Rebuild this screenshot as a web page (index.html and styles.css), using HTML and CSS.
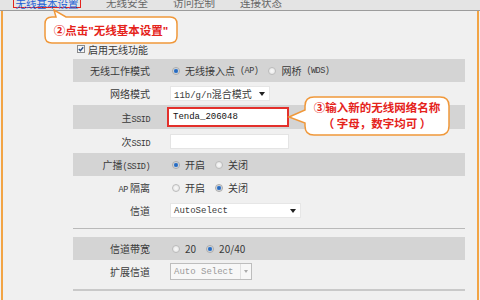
FILE: index.html
```html
<!DOCTYPE html>
<html lang="zh-CN">
<head>
  <meta charset="UTF-8" />
  <title>无线基本设置</title>
  <link rel="stylesheet" href="styles.css">
</head>
<body>

  <div class="tabs">
    <span class="tab active">无线基本设置</span>
    <span class="tab">无线安全</span>
    <span class="tab">访问控制</span>
    <span class="tab">连接状态</span>
  </div>

  <div class="main">
    <div class="enable">
      <span class="check">
        <svg width="6" height="6" viewBox="0 0 6 6"><path d="M0.8 3 L2.4 4.6 L5.2 1.2" fill="none" stroke="#2a4f86" stroke-width="1.4"/></svg>
      </span>
      启用无线功能
    </div>

    <div class="table">
      <div class="row alt">
        <div class="label">无线工作模式</div>
        <div class="value">
          <span class="opt"><span class="radio on"></span>无线接入点<span class="sm">(AP)</span></span>
          <span class="opt"><span class="radio"></span>网桥<span class="sm">(WDS)</span></span>
        </div>
      </div>
      <div class="row">
        <div class="label">网络模式</div>
        <div class="value">
          <div class="select mode"><span><span class="mono">11b/g/n</span>混合模式</span><span class="arrow"></span></div>
        </div>
      </div>
      <div class="row alt tall">
        <div class="label">主<span class="sm">SSID</span></div>
        <div class="value">
          <div class="input ssid">Tenda_206048</div>
        </div>
      </div>
      <div class="row tall">
        <div class="label">次<span class="sm">SSID</span></div>
        <div class="value">
          <div class="input"></div>
        </div>
      </div>
      <div class="row alt">
        <div class="label">广播<span class="sm">(SSID)</span></div>
        <div class="value">
          <span class="opt"><span class="radio on"></span>开启</span>
          <span class="opt"><span class="radio"></span>关闭</span>
        </div>
      </div>
      <div class="row">
        <div class="label"><span class="sm">AP</span> 隔离</div>
        <div class="value">
          <span class="opt"><span class="radio"></span>开启</span>
          <span class="opt"><span class="radio on"></span>关闭</span>
        </div>
      </div>
      <div class="row">
        <div class="label">信道</div>
        <div class="value">
          <div class="select channel"><span class="mono">AutoSelect</span><span class="arrow"></span></div>
        </div>
      </div>

      <div class="sep"></div>

      <div class="row alt">
        <div class="label">信道带宽</div>
        <div class="value">
          <span class="opt"><span class="radio"></span>20</span>
          <span class="opt"><span class="radio on"></span>20/40</span>
        </div>
      </div>
      <div class="row">
        <div class="label">扩展信道</div>
        <div class="value">
          <div class="select ext"><span class="mono">Auto Select</span><span class="arrow-box"><span class="arrow"></span></span></div>
        </div>
      </div>

      <div class="sep thick"></div>
    </div>
  </div>

  <!-- annotation bubbles -->
  <div class="callout callout-tab">
    <svg width="135" height="36" viewBox="0 0 135 36">
      <path d="M8 8 L12 8 L10 1 L22 8 L126 8 Q133 8 133 15 L133 27 Q133 34 126 34 L8 34 Q1 34 1 27 L1 15 Q1 8 8 8 Z" fill="#fff" stroke="#f0983a" stroke-width="1.5"/>
    </svg>
    <div class="callout-text">②点击<span class="q">"</span>无线基本设置<span class="q">"</span></div>
  </div>

  <div class="callout callout-ssid">
    <svg width="164" height="42" viewBox="0 0 164 42">
      <path d="M27 2 L153 2 Q162 2 162 11 L162 31 Q162 40 153 40 L27 40 Q18 40 18 31 L18 28 L2 22 L18 15 L18 11 Q18 2 27 2 Z" fill="#fff" stroke="#f0983a" stroke-width="1.5"/>
    </svg>
    <div class="callout-text">③输入新的无线网络名称<br>（ 字母，数字均可 ）</div>
  </div>

</body>
</html>
```

FILE: styles.css
```css
* { box-sizing: border-box; }
body {
  margin: 0;
  width: 480px;
  height: 300px;
  overflow: hidden;
  position: relative;
  background: #f0f0f0;
  font-family: "Noto Sans CJK SC", sans-serif;
  font-size: 10px;
  color: #3a3a3a;
}
.tabs {
  height: 11px;
  background: #e4e4e4;
  border-bottom: 1px solid #9c9c9c;
  display: flex;
  align-items: flex-start;
  gap: 25px;
  padding-left: 13px;
  overflow: hidden;
}
.tab {
  font-size: 10.5px;
  line-height: 9px;
  height: 10px;
  margin-top: -2px;
  color: #666;
  white-space: nowrap;
}
.tab.active {
  color: #1c5fd6;
  border: 1.5px solid #e3231e;
  padding: 0 1.5px;
}
.main {
  height: 289px;
  margin: 0 1px;
  border-left: 2px solid #f2a445;
  border-right: 2px solid #f2a445;
  padding-top: 33px;
}
.enable {
  display: flex;
  align-items: center;
  height: 10px;
  margin-left: 74px;
  gap: 3px;
  white-space: nowrap;
}
.check {
  width: 8px;
  height: 8px;
  border: 1px solid #8a8a8a;
  background: #f6f6f6;
  display: flex;
  align-items: center;
  justify-content: center;
}
.table {
  margin: 5px 0 0 70px;
  width: 392px;
}
.row {
  display: flex;
  align-items: center;
  height: 23px;
}
.row.tall { height: 24px; }
.row.alt { background: #d4d4d4; }
.label {
  width: 77px;
  text-align: right;
  white-space: nowrap;
}
.value {
  padding-left: 20px;
  display: flex;
  align-items: center;
  white-space: nowrap;
}
.sm {
  font-family: "Liberation Mono", monospace;
  font-size: 8.5px;
  letter-spacing: -0.5px;
}
.mono {
  font-family: "Liberation Mono", monospace;
  font-size: 9px;
}
.opt {
  display: inline-flex;
  align-items: center;
  gap: 5px;
  margin-right: 8px;
}
.radio {
  width: 8px;
  height: 8px;
  margin-left: 2px;
  border-radius: 50%;
  border: 1px solid #bcbcbc;
  background: radial-gradient(circle, #fafafa 0, #e2e2e2 4px);
}
.radio.on {
  border-color: #a9a9a9;
  background: radial-gradient(circle, #1b5cae 0, #3f7fcf 1.8px, #dcdcdc 2.6px, #ececec 4px);
}
.select {
  display: flex;
  align-items: center;
  justify-content: space-between;
  background: #fff;
  border: 1px solid #e6e6e6;
  padding: 0 4px 0 3px;
}
.select.mode { width: 100px; height: 15px; }
.select.channel { width: 131px; height: 15px; }
.arrow {
  width: 0;
  height: 0;
  border-left: 3px solid transparent;
  border-right: 3px solid transparent;
  border-top: 4px solid #222;
}
.select.ext {
  width: 82px;
  height: 17px;
  border-color: #bdbdbd;
  background: #f7f7f7;
  color: #9a9a9a;
  padding-right: 0;
}
.arrow-box {
  width: 11px;
  height: 15px;
  border-left: 1px solid #e0e0e0;
  display: flex;
  align-items: center;
  justify-content: center;
}
.arrow-box .arrow {
  border-top-color: #aaa;
  border-left-width: 2.5px;
  border-right-width: 2.5px;
  border-top-width: 3px;
}
.input {
  width: 119px;
  height: 15px;
  background: #fff;
  border: 1px solid #e4e4e4;
}
.input.ssid {
  width: 122px;
  height: 20px;
  margin-left: -3px;
  border: 2px solid #e3302b;
  padding-left: 4px;
  font-family: "Liberation Mono", monospace;
  font-size: 9px;
  line-height: 16px;
  color: #111;
}
.sep {
  height: 1px;
  background: #b9b9b9;
  margin: 6px 0 8px;
}
.sep.thick {
  height: 2px;
  background: #c9c9c9;
  margin: 6px 0 0;
}
.callout {
  position: absolute;
}
.callout svg { display: block; }
.callout-text {
  position: absolute;
  color: #e5231b;
  font-weight: bold;
  text-align: center;
  white-space: nowrap;
}
.callout-tab { left: 44px; top: 9px; }
.callout-tab .callout-text {
  left: 1px;
  top: 8px;
  width: 132px;
  height: 26px;
  font-size: 11.5px;
  line-height: 26px;
}
.callout-tab .q {
  font-family: "Liberation Sans", sans-serif;
}
.callout-ssid { left: 287px; top: 95px; }
.callout-ssid .callout-text {
  left: 18px;
  top: 4px;
  width: 144px;
  font-size: 11.5px;
  line-height: 16px;
}
```
